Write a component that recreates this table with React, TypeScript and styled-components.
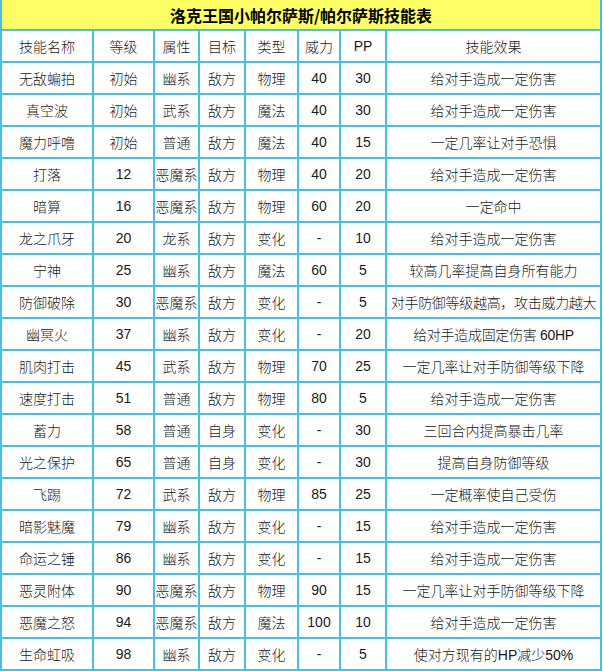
import styled, { createGlobalStyle } from "styled-components";

const GlobalStyles = createGlobalStyle({
  "html, body": {
    margin: 0,
    padding: 0,
    background: "#ffffff"
  },
  body: {
    fontFamily: "\"Liberation Sans\", \"Noto Sans CJK SC\", sans-serif",
    color: "#1a1a1a"
  }
});

const Table = styled.div({
  display: "grid",
  gridTemplateColumns: "90px 59px 43px 44px 51px 40px 44px 213px",
  gridTemplateRows: "29px",
  gridAutoRows: "30px",
  gap: 2,
  width: 598,
  padding: "0 2px 2px 2px",
  background: "#4bbfdb"
});

const Title = styled.div({
  gridColumn: "1 / -1",
  background: "#ffff66",
  display: "flex",
  alignItems: "center",
  justifyContent: "center",
  fontFamily: "\"Noto Sans CJK SC\", sans-serif",
  fontWeight: 700,
  fontSize: 16,
  color: "#000"
});

const Cell = styled.div<{ $wide?: boolean }>(props => ({
  background: "#ffffff",
  display: "flex",
  alignItems: "center",
  justifyContent: "center",
  fontSize: 14,
  fontWeight: 300,
  whiteSpace: "nowrap",
  overflow: "hidden",
  letterSpacing: props.$wide ? -0.3 : 0
}));

const headers = ["技能名称", "等级", "属性", "目标", "类型", "威力", "PP", "技能效果"];

const skills: string[][] = [
  ["无敌蝙拍", "初始", "幽系", "敌方", "物理", "40", "30", "给对手造成一定伤害"],
  ["真空波", "初始", "武系", "敌方", "魔法", "40", "30", "给对手造成一定伤害"],
  ["魔力呼噜", "初始", "普通", "敌方", "魔法", "40", "15", "一定几率让对手恐惧"],
  ["打落", "12", "恶魔系", "敌方", "物理", "40", "20", "给对手造成一定伤害"],
  ["暗算", "16", "恶魔系", "敌方", "物理", "60", "20", "一定命中"],
  ["龙之爪牙", "20", "龙系", "敌方", "变化", "-", "10", "给对手造成一定伤害"],
  ["宁神", "25", "幽系", "敌方", "魔法", "60", "5", "较高几率提高自身所有能力"],
  ["防御破除", "30", "恶魔系", "敌方", "变化", "-", "5", "对手防御等级越高，攻击威力越大"],
  ["幽冥火", "37", "幽系", "敌方", "变化", "-", "20", "给对手造成固定伤害 60HP"],
  ["肌肉打击", "45", "武系", "敌方", "物理", "70", "25", "一定几率让对手防御等级下降"],
  ["速度打击", "51", "普通", "敌方", "物理", "80", "5", "给对手造成一定伤害"],
  ["蓄力", "58", "普通", "自身", "变化", "-", "30", "三回合内提高暴击几率"],
  ["光之保护", "65", "普通", "自身", "变化", "-", "30", "提高自身防御等级"],
  ["飞踢", "72", "武系", "敌方", "物理", "85", "25", "一定概率使自己受伤"],
  ["暗影魅魔", "79", "幽系", "敌方", "变化", "-", "15", "给对手造成一定伤害"],
  ["命运之锤", "86", "幽系", "敌方", "变化", "-", "15", "给对手造成一定伤害"],
  ["恶灵附体", "90", "恶魔系", "敌方", "物理", "90", "15", "一定几率让对手防御等级下降"],
  ["恶魔之怒", "94", "恶魔系", "敌方", "魔法", "100", "10", "给对手造成一定伤害"],
  ["生命虹吸", "98", "幽系", "敌方", "变化", "-", "5", "使对方现有的HP减少50%"]
];

export default function App() {
  return (
    <>
      <GlobalStyles />
      <Table>
        <Title>洛克王国小帕尔萨斯/帕尔萨斯技能表</Title>
        {headers.map(h => (
          <Cell key={h}>{h}</Cell>
        ))}
        {skills.map(row =>
          row.map((value, i) => (
            <Cell key={row[0] + i} $wide={value.length > 13}>
              {value}
            </Cell>
          ))
        )}
      </Table>
    </>
  );
}
